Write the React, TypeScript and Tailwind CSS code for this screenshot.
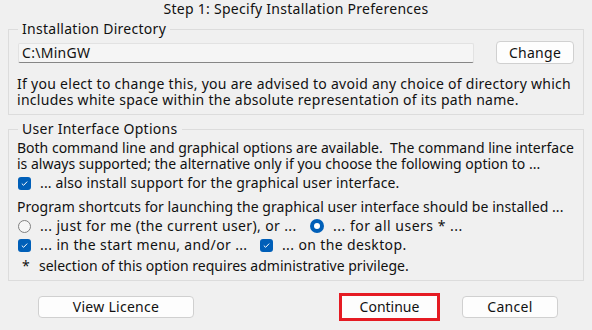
import React from "react";

function Check() {
  return (
    <span className="inline-flex h-[13px] w-[13px] shrink-0 items-center justify-center rounded-[3px] bg-[#005fb8]">
      <svg width="9" height="9" viewBox="0 0 9 9">
        <path d="M1.8 4.6 L3.6 6.3 L7.2 2.6" fill="none" stroke="#fff" strokeWidth="1" />
      </svg>
    </span>
  );
}

function RadioOff() {
  return <span className="inline-block h-[13px] w-[13px] shrink-0 rounded-full border border-[#808080] bg-[#f6f6f6]" />;
}

function RadioOn() {
  return (
    <span className="inline-flex h-[14px] w-[14px] shrink-0 items-center justify-center rounded-full bg-[#005fb8]">
      <span className="h-[6px] w-[6px] rounded-full bg-white" />
    </span>
  );
}

export default function App() {
  return (
    <div className="h-[330px] w-[592px] overflow-hidden bg-[#f0f0f0] font-['Noto_Sans',sans-serif] text-[14px] leading-4 tracking-[0.28px] text-[#111]">
      <div className="h-[18px] text-center leading-[18px]">Step 1: Specify Installation Preferences</div>

      <fieldset className="mx-2 mt-[3px] border border-[#dcdcdc] pl-[9px] pr-[9px] pb-[6px]">
        <legend className="px-[4px] leading-4">Installation Directory</legend>
        <div className="mt-[4px] flex items-center">
          <div className="flex h-5 w-[456px] items-center rounded-[2px] border border-b-[#868686] border-[#e2e2e2] bg-[#f5f5f5] pl-[3px]">
            C:\MinGW
          </div>
          <div className="ml-auto flex h-[23px] w-[78px] items-center justify-center rounded-[4px] border border-[#d0d0d0] bg-[#fdfdfd]">
            Change
          </div>
        </div>
        <p className="mt-[12px] -ml-px whitespace-nowrap">
          If you elect to change this, you are advised to avoid any choice of directory which
          <br />
          includes white space within the absolute representation of its path name.
        </p>
      </fieldset>

      <fieldset className="mx-2 mt-[6px] border border-[#dcdcdc] pl-[9px] pr-[9px] pb-[6px]">
        <legend className="px-[4px] leading-4">User Interface Options</legend>
        <p className="mt-[3px] -ml-px whitespace-nowrap tracking-normal">
          Both command line and graphical options are available.&nbsp; The command line interface
          <br />
          is always supported; the alternative only if you choose the following option to ...
        </p>
        <div className="mt-[3px] flex h-4 items-center gap-[9px] whitespace-nowrap">
          <Check />
          <span className="tracking-[0.15px]">... also install support for the graphical user interface.</span>
        </div>
        <p className="mt-2 -ml-px whitespace-nowrap tracking-[0.06px]">
          Program shortcuts for launching the graphical user interface should be installed ...
        </p>
        <div className="mt-[3px] flex h-4 items-center whitespace-nowrap tracking-[0.37px]">
          <div className="flex w-[292px] items-center gap-[9px]">
            <RadioOff />
            <span>... just for me (the current user), or ...</span>
          </div>
          <div className="flex items-center gap-[9px]">
            <RadioOn />
            <span className="tracking-[0.5px]">... for all users * ...</span>
          </div>
        </div>
        <div className="mt-[3px] flex h-4 items-center whitespace-nowrap tracking-[0.37px]">
          <div className="flex w-[242px] items-center gap-[9px]">
            <Check />
            <span>... in the start menu, and/or ...</span>
          </div>
          <div className="flex items-center gap-[9px]">
            <Check />
            <span>... on the desktop.</span>
          </div>
        </div>
        <div className="mt-[5px] flex h-4 items-center whitespace-nowrap tracking-normal">
          <span className="w-[21px] pl-[4px]">*</span>
          <span>selection of this option requires administrative privilege.</span>
        </div>
      </fieldset>

      <div className="mt-[12px] flex items-center">
        <div className="ml-[38px] flex h-[22px] w-[156px] items-center justify-center rounded-[4px] border border-[#d0d0d0] bg-[#fdfdfd]">
          View Licence
        </div>
        <div className="ml-[145px] flex h-[28px] w-[101px] items-center justify-center border-[3px] border-[#e51b23] bg-[#fdfdfd] tracking-normal">
          Continue
        </div>
        <div className="ml-[22px] flex h-[22px] w-[96px] items-center justify-center rounded-[4px] border border-[#d0d0d0] bg-[#fdfdfd]">
          Cancel
        </div>
      </div>
    </div>
  );
}
